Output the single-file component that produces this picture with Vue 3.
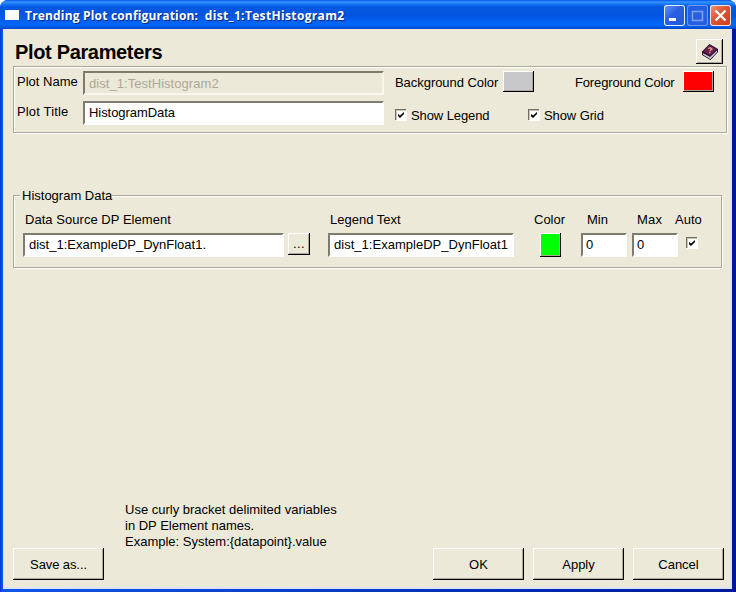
<script setup>
import { ref } from 'vue'

const plotName = ref('dist_1:TestHistogram2')
const plotTitle = ref('HistogramData')
const source = ref('dist_1:ExampleDP_DynFloat1.')
const legend = ref('dist_1:ExampleDP_DynFloat1')
const min = ref('0')
const max = ref('0')
const showLegend = ref(true)
const showGrid = ref(true)
const auto = ref(true)
</script>

<template>
  <div class="window">
    <header class="titlebar">
      <span class="app-icon"></span>
      <span class="caption">Trending Plot configuration:&nbsp; <span class="subject">dist_1:TestHistogram2</span></span>
      <div class="controls">
        <button class="ctl">
          <svg width="21" height="21" viewBox="0 0 21 21"><rect x="5" y="13" width="7" height="3" fill="#fff" /></svg>
        </button>
        <button class="ctl dim">
          <svg width="21" height="21" viewBox="0 0 21 21"><path d="M5 6.5H16M5.5 6V15.5H15.5V6" fill="none" stroke="#7f9ff0" stroke-width="1.6" /></svg>
        </button>
        <button class="ctl close">
          <svg width="21" height="21" viewBox="0 0 21 21"><path d="M5.5 5.5L15.5 15.5M15.5 5.5L5.5 15.5" stroke="#fff" stroke-width="2.3" /></svg>
        </button>
      </div>
    </header>

    <main class="client">
      <div class="heading">
        <h1>Plot Parameters</h1>
        <button class="btn help">
          <svg width="18" height="18" viewBox="0 0 18 18">
            <path d="M1 8.5L8.5 1L17 6V9L9.5 17L1 12Z" fill="#24102c" />
            <path d="M2 8.5L8.7 2L15.8 6.2L9 12.6Z" fill="#6a2050" />
            <path d="M2.2 10.2L9 14L16 7.5V9L9.3 15.9L2.2 11.8Z" fill="#e8e4f0" />
            <path d="M2.6 11L9.1 15L15.8 8.4" fill="none" stroke="#a094b0" stroke-width=".5" />
            <path d="M7.3 5.6L9.2 4.7L11 6L9.2 7.4V8.3M8.3 9.4L9.4 9.9" fill="none" stroke="#f0a878" stroke-width="1.2" />
          </svg>
        </button>
      </div>

      <section class="group params">
        <div class="names">
          <label class="t-name">Plot Name</label>
          <input v-model="plotName" class="field disabled" disabled />
          <label class="t-title">Plot Title</label>
          <input v-model="plotTitle" class="field t-hd" />
        </div>
        <div class="options">
          <div class="colors">
            <span class="t-bg">Background Color</span>
            <button class="btn swatch gray"></button>
            <span class="t-fg">Foreground Color</span>
            <button class="btn swatch red"></button>
          </div>
          <div class="checks">
            <label class="check legend-check" @click="showLegend = !showLegend">
              <span class="box"><svg v-if="showLegend" width="6" height="6" viewBox="0 0 6 6"><path d="M0 2L2 3.6L6 0V2L2 6L0 4.2Z" /></svg></span>
              <span class="t-sl">Show Legend</span>
            </label>
            <label class="check" @click="showGrid = !showGrid">
              <span class="box"><svg v-if="showGrid" width="6" height="6" viewBox="0 0 6 6"><path d="M0 2L2 3.6L6 0V2L2 6L0 4.2Z" /></svg></span>
              <span class="t-sl">Show Grid</span>
            </label>
          </div>
        </div>
      </section>

      <section class="group histogram">
        <h2><span>Histogram Data</span></h2>
        <div class="data">
          <span class="t-ds">Data Source DP Element</span>
          <span></span>
          <span class="t-lt">Legend Text</span>
          <span class="t-color">Color</span>
          <span class="t-min">Min</span>
          <span class="t-max">Max</span>
          <span class="t-auto">Auto</span>
          <input v-model="source" class="field source" />
          <button class="btn browse">...</button>
          <input v-model="legend" class="field legend-field" />
          <button class="btn swatch green"></button>
          <input v-model="min" class="field num" />
          <input v-model="max" class="field num" />
          <span class="box auto" @click="auto = !auto"><svg v-if="auto" width="6" height="6" viewBox="0 0 6 6"><path d="M0 2L2 3.6L6 0V2L2 6L0 4.2Z" /></svg></span>
        </div>
      </section>

      <p class="hint">
        <span>Use curly bracket delimited variables</span>
        <span>in DP Element names.</span>
        <span>Example: System:{datapoint}.value</span>
      </p>

      <footer>
        <button class="btn action save">Save as...</button>
        <button class="btn action">OK</button>
        <button class="btn action">Apply</button>
        <button class="btn action">Cancel</button>
      </footer>
    </main>
  </div>
</template>

<style>
body {
  background: #fff;
}
</style>

<style scoped>
* {
  box-sizing: border-box;
}
.window {
  width: 736px;
  height: 592px;
  display: flex;
  flex-direction: column;
  background: linear-gradient(90deg, #0831d9 0, #0f56e8 2px, #0f56e8 3px, #001a9c 732px, #00138c 100%);
  border-radius: 8px 8px 0 0;
  overflow: hidden;
  font: 13px/16px "Liberation Sans", Arial, sans-serif;
  color: #000;
}
.titlebar {
  flex: none;
  height: 29px;
  display: flex;
  align-items: center;
  padding: 2px 5px 0 5px;
  background: linear-gradient(180deg, #0058e8 0, #3a93ff 2px, #1677f8 4px, #0559e0 7px, #0054e0 15px, #0562f5 22px, #0066fb 25px, #0452d8 28px, #0340c0 29px);
}
.app-icon {
  width: 14px;
  height: 10px;
  margin: -1px 6px 0 0;
  background: #fff;
}
.caption {
  flex: 1;
  font: bold 12px/16px "Open Sans", "Noto Sans", sans-serif;
  letter-spacing: 0.18px;
  color: #fff;
  text-shadow: 1px 1px 0 #0a2a80;
  white-space: nowrap;
}
.subject {
  letter-spacing: 0.35px;
}
.controls {
  display: flex;
  gap: 2px;
}
.ctl {
  width: 21px;
  height: 21px;
  padding: 0;
  border: 0;
  border-radius: 3px;
  box-shadow: inset 0 0 0 1px #e8effc;
  background: linear-gradient(135deg, #6c94f4, #2a5fe0 45%, #2058e0);
}
.ctl svg {
  display: block;
}
.ctl.dim {
  background: #265ee0;
  box-shadow: inset 0 0 0 1px #7598ec;
}
.ctl.close {
  background: linear-gradient(135deg, #ee9a7c, #df5433 45%, #cc3c16);
  box-shadow: inset 0 0 0 1px #f4e4e4;
}
.client {
  flex: 1;
  margin: 0 4px 3px 3px;
  padding: 10px 0 0 10px;
  background: #ece9d8;
  border-right: 2px solid #dbe3f6;
  border-bottom: 2px solid #dbe3f6;
  display: flex;
  flex-direction: column;
}
.heading {
  display: flex;
  justify-content: space-between;
  height: 27px;
  padding: 0 7px 0 2px;
}
h1 {
  margin: 2px 0 0;
  font: bold 20px/23px "Liberation Sans", Arial, sans-serif;
  letter-spacing: -0.34px;
}
.btn {
  padding: 0;
  border: 0;
  background-color: #ece9d8;
  color: #000;
  font: inherit;
  box-shadow: inset -1px -1px #000, inset 1px 1px #fff, inset -2px -2px #aca899;
}
.help {
  width: 27px;
  height: 25px;
  display: grid;
  place-items: center;
}
.group {
  border: 1px solid #aca899;
  box-shadow: 1px 1px #fff, inset 1px 1px #fff;
}
.params {
  width: 714px;
  height: 67px;
  display: flex;
}
.names {
  display: grid;
  grid-template-columns: 66px 301px;
  grid-template-rows: 24px 24px;
  row-gap: 6px;
  padding: 4px 0 0 3px;
}
.names label {
  margin-top: 3px;
}
.t-title {
  letter-spacing: 0.15px;
}
.field {
  min-width: 0;
  width: 100%;
  height: 24px;
  margin: 0;
  padding: 0 2px 1px 4px;
  border: 2px solid;
  border-color: #7f7b6f #fff #fff #7f7b6f;
  border-radius: 0;
  background: #fff;
  color: #000;
  font: inherit;
  letter-spacing: 0;
  outline: 0;
}
.names .field {
  height: 100%;
}
.field.t-hd {
  letter-spacing: -0.06px;
}
.field.disabled {
  padding-bottom: 0;
  background: #ece9d8;
  color: #aca899;
  letter-spacing: 0.05px;
  border-color: #7f7b6f #f8f6ee #f8f6ee #7f7b6f;
}
.options {
  padding: 4px 0 0 11px;
}
.colors {
  display: grid;
  grid-template-columns: 108px 72px 108px 31px;
  height: 38px;
}
.colors span {
  margin-top: 4px;
}
.t-bg {
  letter-spacing: -0.05px;
}
.t-fg {
  letter-spacing: -0.15px;
}
.t-sl {
  letter-spacing: -0.1px;
}
.swatch {
  width: 31px;
  height: 21px;
}
.gray {
  background: #c8c8ca;
}
.red {
  background: #f00;
}
.green {
  background: #0f0;
  width: 21px;
  height: 24px;
}
.checks {
  display: flex;
  margin-top: -1px;
}
.check {
  display: flex;
  gap: 5px;
}
.legend-check {
  width: 133px;
}
.box {
  width: 11px;
  height: 11px;
  padding: 1px 0 0 1px;
  display: grid;
  place-items: center;
  background: #fff;
  box-shadow: inset 1px 1px #716f64, 1px 1px #fff, inset 2px 2px #c8c4b4;
}
.check .box {
  margin-top: 1px;
}
.histogram {
  width: 709px;
  height: 73px;
  margin-top: 62px;
}
h2 {
  margin: -8px 0 0 6px;
  font: inherit;
  height: 16px;
}
h2 span {
  display: inline-block;
  padding: 0 0 0 2px;
  background: #ece9d8;
}
.data {
  display: grid;
  grid-template-columns: 265px 40px 212px 41px 51px 54px 24px;
  grid-template-rows: 22px 25px;
  padding: 7px 0 0 9px;
}
.data > span:not(.box) {
  padding-top: 1px;
}
.t-ds {
  padding-left: 2px;
  letter-spacing: 0.04px;
}
.source {
  width: 261px;
}
.browse {
  width: 22px;
  height: 22px;
  letter-spacing: 0.4px;
}
.legend-field {
  width: 186px;
  padding-right: 0;
  letter-spacing: 0.02px;
}
.num {
  width: 46px;
  padding-left: 3px;
}
.auto {
  margin-top: 4px;
}
.hint {
  margin: 234px 0 0 112px;
  height: 48px;
  display: flex;
  flex-direction: column;
  white-space: nowrap;
}
footer {
  display: flex;
  gap: 9px;
  margin-top: -2px;
}
.action {
  width: 91px;
  height: 32px;
  padding-top: 1px;
}
.save {
  margin-right: 320px;
  letter-spacing: -0.1px;
}
label,
span {
  white-space: nowrap;
}
.t-lt {
  padding-left: 2px;
}
.t-color {
  margin-left: -6px;
}
.t-min {
  padding-left: 6px;
}
.t-max {
  padding-left: 5px;
  letter-spacing: 0.2px;
}
.t-auto {
  margin-left: -11px;
}
</style>
